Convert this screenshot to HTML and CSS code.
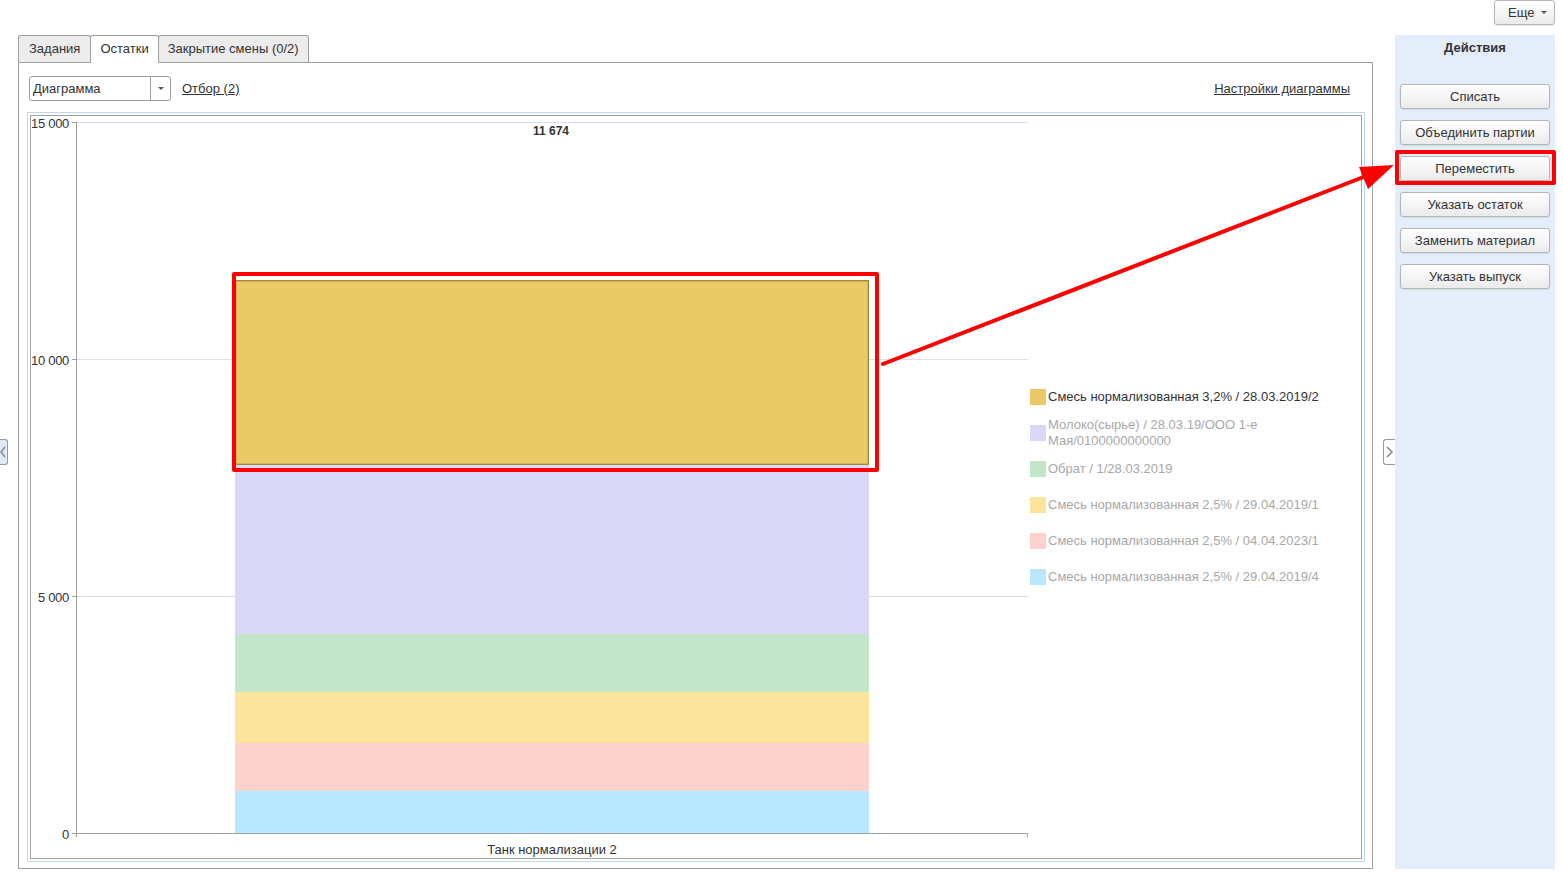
FILE: index.html
```html
<!DOCTYPE html>
<html lang="ru">
<head>
<meta charset="utf-8">
<title>Остатки</title>
<link rel="stylesheet" href="styles.css">
</head>
<body>
<div class="topbar">
  <button class="btn more"><span>Еще</span><span class="caret"></span></button>
</div>
<div class="main">
  <div class="gutter-left">
    <div class="toggle toggle-left">
      <svg width="6" height="12" viewBox="0 0 6 12"><polyline points="5,1 1,6 5,11" fill="none" stroke="#8c8c8c" stroke-width="1.6"/></svg>
    </div>
  </div>
  <div class="tabs-wrap">
    <div class="tabbar">
      <div class="tab">Задания</div>
      <div class="tab active">Остатки</div>
      <div class="tab">Закрытие смены (0/2)</div>
    </div>
    <div class="tab-content">
      <div class="toolbar">
        <div class="select">
          <span class="select-text">Диаграмма</span>
          <span class="select-btn"><span class="caret"></span></span>
        </div>
        <a class="link filter">Отбор (2)</a>
        <a class="link settings">Настройки диаграммы</a>
      </div>
      <div class="chart-frame">
        <div class="chart">
          <div class="grid g15"></div>
          <div class="grid g10"></div>
          <div class="grid g5"></div>
          <div class="axis-x"></div>
          <div class="axis-y"></div>
          <div class="tick t15"></div>
          <div class="tick t10"></div>
          <div class="tick t5"></div>
          <div class="tick t0"></div>
          <div class="tick-end"></div>
          <div class="ylabel y15">15 000</div>
          <div class="ylabel y10">10 000</div>
          <div class="ylabel y5">5 000</div>
          <div class="ylabel y0">0</div>
          <div class="value">11 674</div>
          <div class="bar">
            <div class="seg c-gold seg-gold" style="height:185px"></div>
            <div class="seg c-lav" style="height:169px"></div>
            <div class="seg c-green" style="height:58px"></div>
            <div class="seg c-yellow" style="height:51px"></div>
            <div class="seg c-pink" style="height:48px"></div>
            <div class="seg c-blue" style="height:42px"></div>
          </div>
          <div class="bar-highlight"></div>
          <div class="xlabel">Танк нормализации 2</div>
          <div class="legend">
            <div class="legend-item active"><span class="swatch c-gold"></span><span>Смесь нормализованная 3,2% / 28.03.2019/2</span></div>
            <div class="legend-item"><span class="swatch c-lav"></span><span>Молоко(сырье) / 28.03.19/ООО 1-е<br>Мая/0100000000000</span></div>
            <div class="legend-item"><span class="swatch c-green"></span><span>Обрат / 1/28.03.2019</span></div>
            <div class="legend-item"><span class="swatch c-yellow"></span><span>Смесь нормализованная 2,5% / 29.04.2019/1</span></div>
            <div class="legend-item"><span class="swatch c-pink"></span><span>Смесь нормализованная 2,5% / 04.04.2023/1</span></div>
            <div class="legend-item"><span class="swatch c-blue"></span><span>Смесь нормализованная 2,5% / 29.04.2019/4</span></div>
          </div>
        </div>
      </div>
    </div>
  </div>
  <div class="gutter-right">
    <div class="toggle toggle-right">
      <svg width="9" height="12" viewBox="0 0 9 12"><polyline points="2,1 7,6 2,11" fill="none" stroke="#8c8c8c" stroke-width="1.6"/></svg>
    </div>
  </div>
  <aside class="side">
    <div class="side-title">Действия</div>
    <button class="btn action">Списать</button>
    <button class="btn action">Объединить партии</button>
    <button class="btn action">Переместить</button>
    <button class="btn action">Указать остаток</button>
    <button class="btn action">Заменить материал</button>
    <button class="btn action">Указать выпуск</button>
    <div class="btn-highlight"></div>
  </aside>
</div>
<svg class="overlay" width="1563" height="873" viewBox="0 0 1563 873">
  <line x1="883" y1="364" x2="1366" y2="176" stroke="#ff0000" stroke-width="4" stroke-linecap="round"/>
  <polygon points="1394,165 1359,167 1368,189" fill="#ff0000"/>
</svg>
</body>
</html>
```
FILE: styles.css
```css
* { box-sizing: border-box; }
html, body { margin: 0; padding: 0; }
body {
  width: 1563px;
  height: 873px;
  overflow: hidden;
  background: #fff;
  font-family: "Liberation Sans", Arial, sans-serif;
  font-size: 13px;
  color: #333;
  position: relative;
}

.topbar {
  height: 35px;
  display: flex;
  justify-content: flex-end;
  padding-right: 8px;
}

.btn {
  font: inherit;
  color: #333;
  height: 25px;
  border: 1px solid #b5b5b5;
  border-radius: 3px;
  background: linear-gradient(#ffffff, #ebebeb);
  box-shadow: 0 1px 1px rgba(0, 0, 0, 0.08);
  padding: 0;
  display: flex;
  align-items: center;
  justify-content: center;
  cursor: default;
}

.more {
  width: 61px;
  justify-content: flex-start;
  padding-left: 13px;
  gap: 7px;
}

.caret {
  width: 0;
  height: 0;
  border-left: 3px solid transparent;
  border-right: 3px solid transparent;
  border-top: 3px solid #555;
}

.main {
  display: flex;
  height: 834px;
}

.gutter-left {
  width: 18px;
  display: flex;
  align-items: center;
}

.toggle {
  height: 26px;
  border: 1px solid #9a9a9a;
  display: flex;
  align-items: center;
  justify-content: center;
}

.toggle-left {
  width: 8px;
  border-left: none;
  border-radius: 0 3px 3px 0;
  background: #dfeaf7;
  justify-content: flex-start;
}

.gutter-right {
  width: 22px;
  display: flex;
  align-items: center;
  justify-content: flex-end;
}

.toggle-right {
  width: 12px;
  border-right: none;
  border-radius: 3px 0 0 3px;
  background: #fff;
}

.tabs-wrap {
  width: 1355px;
  display: flex;
  flex-direction: column;
}

.tabbar {
  display: flex;
  height: 27px;
  align-items: flex-start;
}

.tab {
  height: 27px;
  border: 1px solid #a0a0a0;
  border-bottom: none;
  border-radius: 3px 3px 0 0;
  background: #ececec;
  padding: 0 9px;
  line-height: 25px;
  margin-right: -1px;
  white-space: nowrap;
}

.tab:first-child { padding: 0 10px; }

.tab.active {
  background: #fff;
  height: 28px;
  position: relative;
  z-index: 1;
}

.tab-content {
  flex: 1;
  border: 1px solid #a0a0a0;
  padding: 13px 7px 6px 8px;
  display: flex;
  flex-direction: column;
}

.toolbar {
  height: 25px;
  flex: none;
  display: flex;
  align-items: center;
  margin: 0 0 11px 2px;
  padding-right: 15px;
}

.select {
  width: 142px;
  height: 25px;
  border: 1px solid #a0a0a0;
  border-radius: 3px;
  display: flex;
  background: #fff;
}

.select-text {
  flex: 1;
  padding-left: 3px;
  line-height: 23px;
}

.select-btn {
  width: 20px;
  border-left: 1px solid #a0a0a0;
  display: flex;
  align-items: center;
  justify-content: center;
}

.link {
  color: #333;
  text-decoration: underline;
}

.filter { margin-left: 11px; }
.settings { margin-left: auto; }

.chart-frame {
  flex: 1;
  border: 1px solid #bcd9f1;
  padding: 2px;
  display: flex;
}

.chart {
  flex: 1;
  border: 1px solid #a0a0a0;
  position: relative;
}

.grid {
  position: absolute;
  left: 45px;
  width: 952px;
  height: 1px;
  background: #dedede;
}
.g15 { top: 6px; }
.g10 { top: 243px; }
.g5 { top: 480px; }

.axis-x {
  position: absolute;
  left: 45px;
  top: 717px;
  width: 952px;
  height: 1px;
  background: #a0a0a0;
}

.axis-y {
  position: absolute;
  left: 45px;
  top: 6px;
  width: 1px;
  height: 715px;
  background: #a0a0a0;
}

.tick {
  position: absolute;
  left: 41px;
  width: 4px;
  height: 1px;
  background: #a0a0a0;
}
.t15 { top: 6px; }
.t10 { top: 243px; }
.t5 { top: 480px; }
.t0 { top: 717px; }

.tick-end {
  position: absolute;
  left: 996px;
  top: 717px;
  width: 1px;
  height: 4px;
  background: #a0a0a0;
}

.ylabel {
  position: absolute;
  left: 0;
  width: 38px;
  text-align: right;
  line-height: 16px;
  white-space: nowrap;
  letter-spacing: -0.3px;
}
.y15 { top: 0; }
.y10 { top: 237px; }
.y5 { top: 474px; }
.y0 { top: 711px; }

.value {
  position: absolute;
  left: 470px;
  width: 100px;
  top: 8px;
  line-height: 14px;
  text-align: center;
  font-weight: bold;
  font-size: 12px;
}

.xlabel {
  position: absolute;
  left: 371px;
  width: 300px;
  top: 727px;
  line-height: 14px;
  text-align: center;
}

.bar {
  position: absolute;
  left: 204px;
  top: 164px;
  width: 634px;
  display: flex;
  flex-direction: column;
}

.seg { width: 100%; }
.seg-gold {
  border: 1px solid #a3873a;
  box-shadow: inset 0 0 0 1px #d2b257;
}

.c-gold { background: #eac967; }
.c-lav { background: #d9d8f6; }
.c-green { background: #c1e6c9; }
.c-yellow { background: #fde49d; }
.c-pink { background: #fdd1cc; }
.c-blue { background: #b8e8fd; }

.bar-highlight {
  position: absolute;
  left: 201px;
  top: 156px;
  width: 647px;
  height: 200px;
  border: 4px solid #ff0000;
  border-radius: 2px;
}

.legend {
  position: absolute;
  left: 999px;
  top: 263px;
  display: flex;
  flex-direction: column;
}

.legend-item {
  height: 36px;
  display: flex;
  align-items: center;
  gap: 2px;
  color: #a8a8a8;
  line-height: 16px;
  white-space: nowrap;
}

.legend-item.active { color: #333; }

.swatch {
  width: 16px;
  height: 16px;
  flex: none;
}

.side {
  width: 160px;
  background: #e4eefa;
  position: relative;
  display: flex;
  flex-direction: column;
  align-items: flex-start;
  padding-left: 5px;
}

.side-title {
  width: 150px;
  height: 26px;
  line-height: 26px;
  text-align: center;
  font-weight: bold;
  margin-bottom: 23px;
}

.action {
  width: 150px;
  margin-bottom: 11px;
}

.btn-highlight {
  position: absolute;
  left: 0;
  top: 115px;
  width: 161px;
  height: 35px;
  border: 4px solid #ff0000;
  border-radius: 2px;
}

.overlay {
  position: absolute;
  left: 0;
  top: 0;
  pointer-events: none;
}
```
